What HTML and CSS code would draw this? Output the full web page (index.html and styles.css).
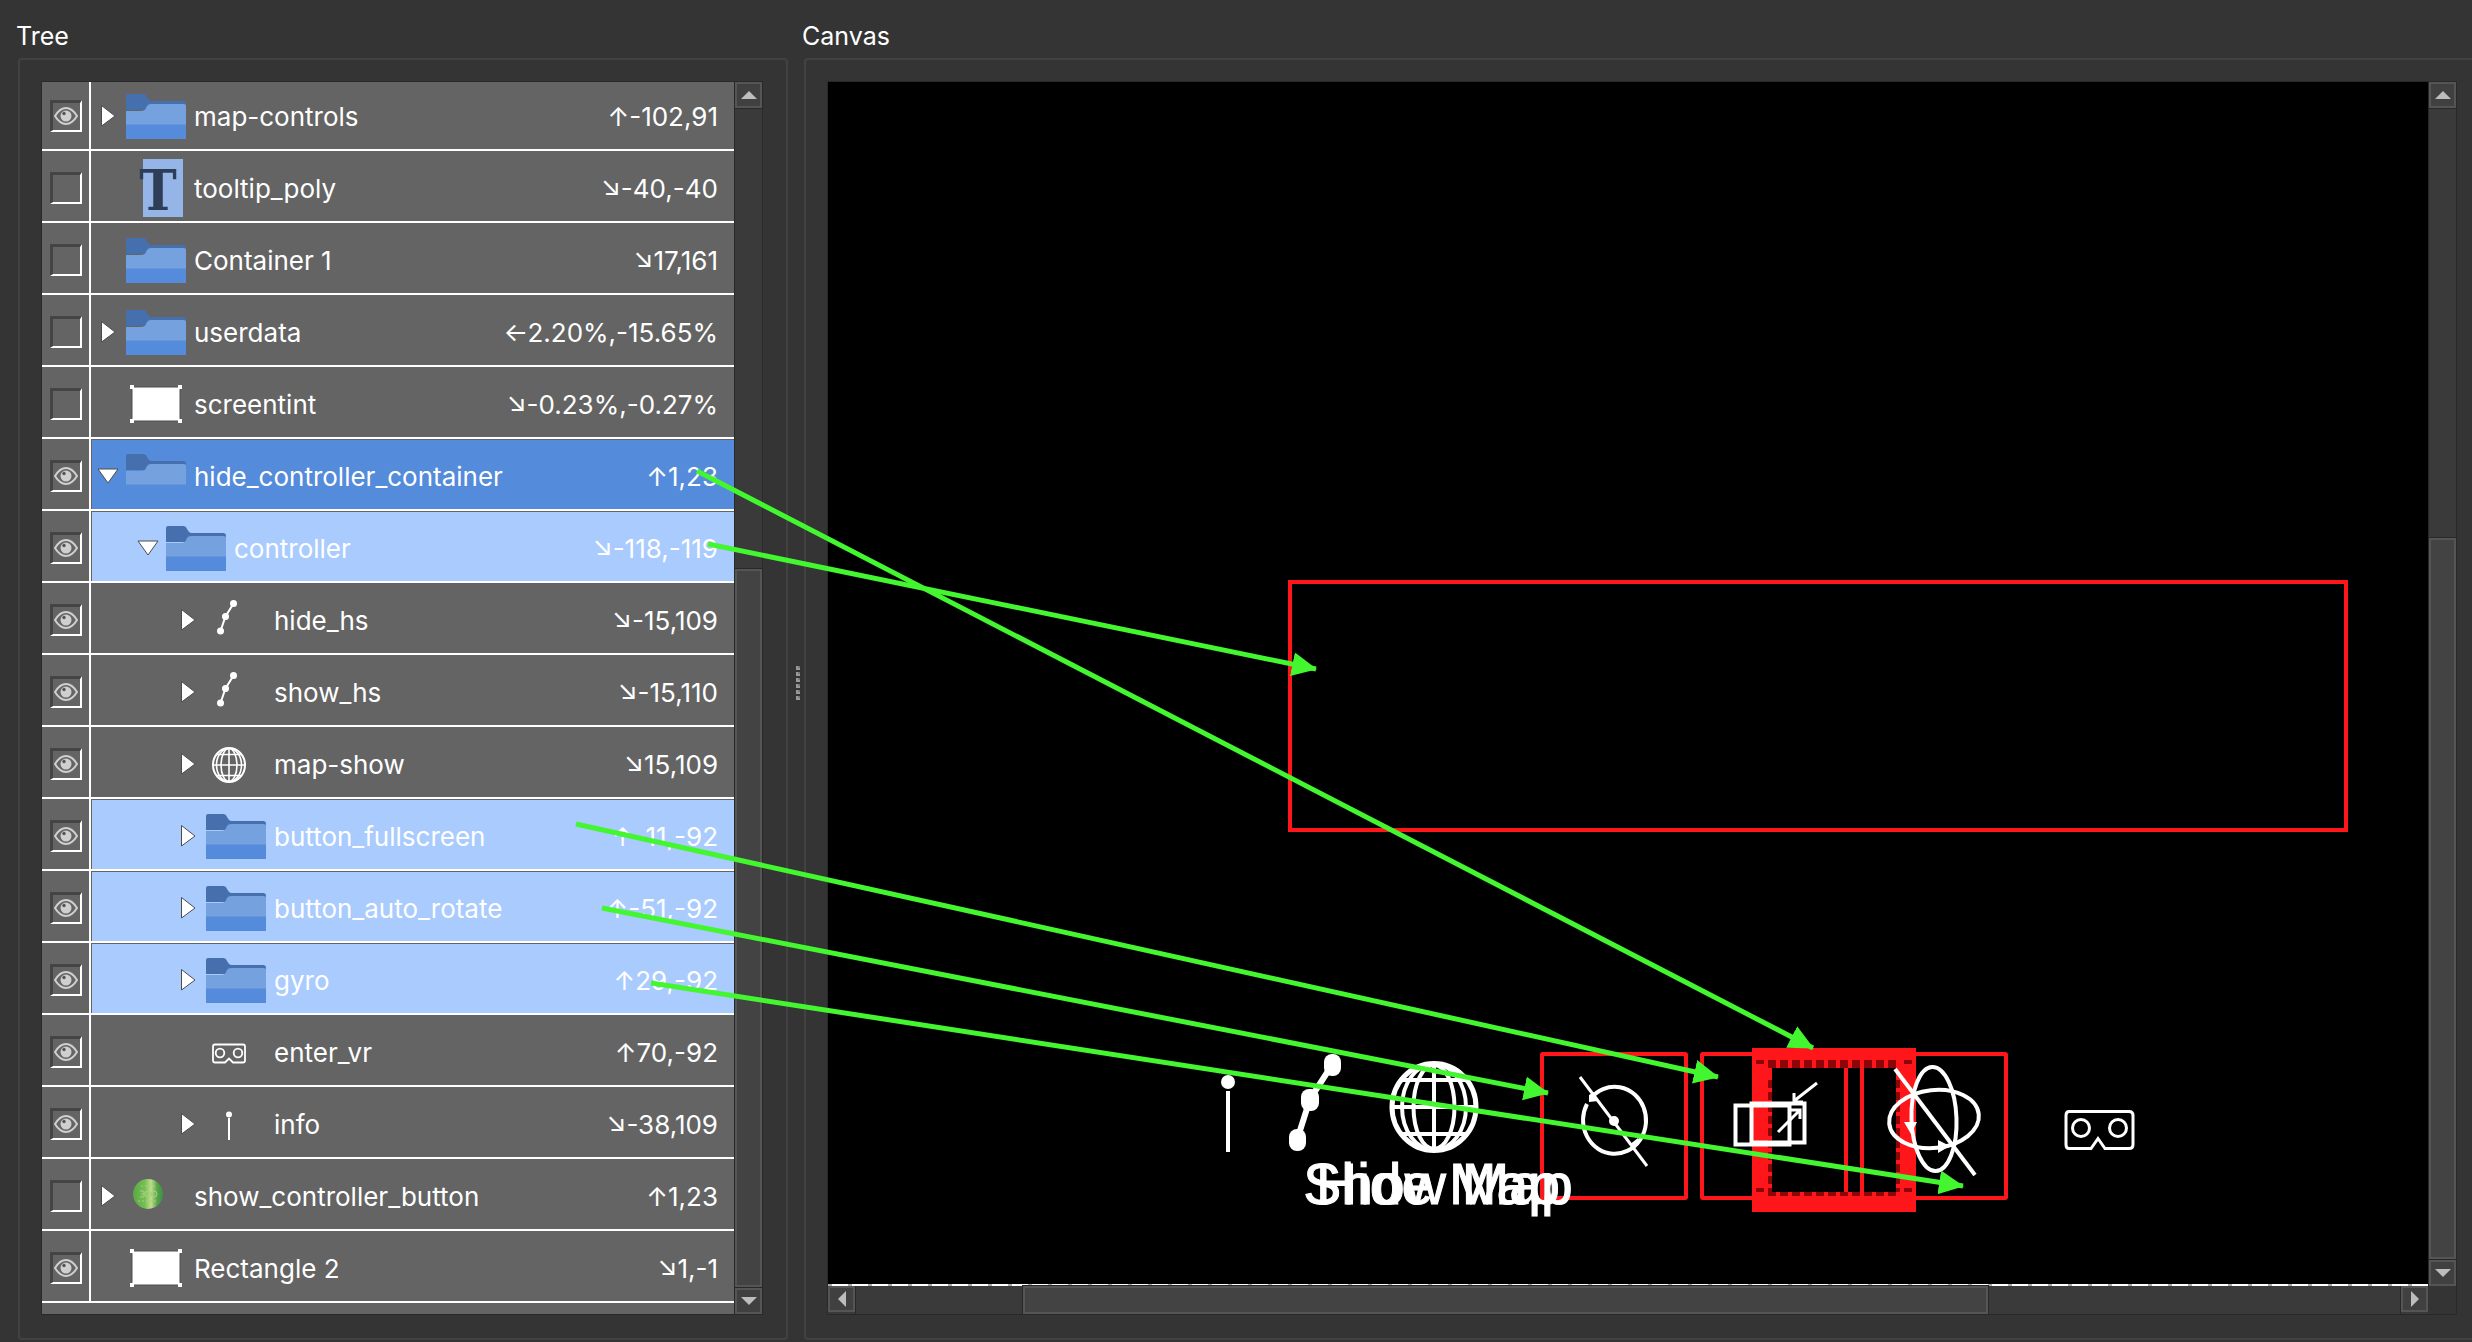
FILE: index.html
```html
<!DOCTYPE html>
<html lang="en">
<head>
<meta charset="utf-8">
<title>Skin editor</title>
<link rel="stylesheet" href="styles.css">
</head>
<body>
<svg class="defs" aria-hidden="true">
  <symbol id="eye" viewBox="0 0 32 32"><path d="M5 16C9 9.500 12 8 16 8s7 1.500 11 8c-4 6.500-7 8-11 8s-7-1.500-11-8z" fill="none" stroke="#cfcfcf" stroke-width="2"/><circle cx="16" cy="16" r="5.500" fill="#cfcfcf"/><circle cx="14" cy="13.500" r="1.700" fill="#555"/></symbol>
  <symbol id="closed" viewBox="0 0 24 24"><path d="M5.500 1.500V22L19 12z" fill="#fff" stroke="#4d4d4d" stroke-width="1"/></symbol>
  <symbol id="open" viewBox="0 0 24 24"><path d="M2 5H22L12 19z" fill="#fff" stroke="#4d4d4d" stroke-width="1"/></symbol>
  <symbol id="folder" viewBox="0 0 60 60"><path d="M0 10q0-2 2-2h15q3 0 4 3l2 3q1 1 3 1h31q3 0 3 3v6H0z" fill="#466fae"/><path d="M0 25h15q4 0 5-3l1-2q1-2 4-2h33q2 0 2 2v19H0z" fill="#75a1df"/><path d="M0 38.500h60V53H0z" fill="#548bda"/></symbol>
  <symbol id="rect" viewBox="0 0 60 60"><path d="M6 13h48v34H6z" fill="#fff" stroke="#4f4f4f"/><path d="M4 11h4v4H4zM52 11h4v4h-4zM4 45h4v4H4zM52 45h4v4h-4z" fill="#fff"/></symbol>
  <symbol id="nodes" viewBox="0 0 60 60"><path d="M27.500 13.500 19.500 26.500 14.500 41" fill="none" stroke="#fff" stroke-width="2"/><g fill="#fff"><circle cx="27.500" cy="13.500" r="3.500"/><circle cx="19.500" cy="26.500" r="3.500"/><circle cx="14.500" cy="41" r="3.500"/></g></symbol>
  <symbol id="globe" viewBox="0 0 60 60"><g fill="none" stroke="#fff" stroke-width="1.600"><ellipse cx="23" cy="31" rx="16" ry="17" stroke-width="2"/><ellipse cx="23" cy="31" rx="12.500" ry="16.500"/><ellipse cx="23" cy="31" rx="8" ry="16.500"/><path d="M23 14v34M7 31h32M10 20.500h26M10 41.500h26"/></g></symbol>
  <symbol id="vr" viewBox="0 0 60 60"><g fill="none" stroke="#fff" stroke-width="1.800"><path d="M9 22.500h28q2 0 2 2v14q0 2-2 2H27l-4-4-4 4H9q-2 0-2-2v-14q0-2 2-2z"/><circle cx="14" cy="31" r="4.300"/><circle cx="32" cy="31" r="4.300"/></g></symbol>
  <symbol id="info" viewBox="0 0 60 60"><circle cx="23" cy="20.500" r="3" fill="#fff"/><path d="M23 24v22" stroke="#fff" stroke-width="2"/></symbol>
  <symbol id="badge" viewBox="0 0 60 60"><circle cx="22" cy="28" r="15" fill="url(#green)"/><g fill="none" stroke="#a5d27d" stroke-width="1"><path d="M15 20h14M12 35h20" stroke-dasharray="2 2"/><circle cx="22" cy="28" r="3"/><circle cx="28" cy="28" r="3"/><path d="M14 25h4v6h-4m1-3h3"/></g></symbol>
  <linearGradient id="green"><stop offset="0" stop-color="#5aa843"/><stop offset=".4" stop-color="#76bf57"/><stop offset=".6" stop-color="#c3dc8e"/><stop offset=".8" stop-color="#58a648"/><stop offset="1" stop-color="#3d8f45"/></linearGradient>
</svg>

<main class="editor">
  <section class="panel" aria-labelledby="tree-title">
    <h2 class="panel-title" id="tree-title">Tree</h2>
    <div class="group">
      <div class="frame tree">
        <ul class="rows">
          <li class="row"><label class="vis"><input type="checkbox" checked aria-label="Show map-controls"><svg class="eye"><use href="#eye"/></svg></label><div class="item"><button class="twisty" aria-label="Expand"><svg><use href="#closed"/></svg></button><svg class="icon"><use href="#folder"/></svg><span class="name">map-controls</span><span class="pos">↑-102,91</span></div></li>
          <li class="row"><label class="vis"><input type="checkbox" aria-label="Show tooltip_poly"></label><div class="item"><span class="twisty"></span><svg class="icon" viewBox="0 0 60 60"><path d="M17 1h40v58H17z" fill="#95b5e8"/><text x="32" y="52" class="type-letter">T</text></svg><span class="name">tooltip_poly</span><span class="pos">↘-40,-40</span></div></li>
          <li class="row"><label class="vis"><input type="checkbox" aria-label="Show Container 1"></label><div class="item"><span class="twisty"></span><svg class="icon"><use href="#folder"/></svg><span class="name">Container 1</span><span class="pos">↘17,161</span></div></li>
          <li class="row"><label class="vis"><input type="checkbox" aria-label="Show userdata"></label><div class="item"><button class="twisty" aria-label="Expand"><svg><use href="#closed"/></svg></button><svg class="icon"><use href="#folder"/></svg><span class="name">userdata</span><span class="pos">←2.20%,-15.65%</span></div></li>
          <li class="row"><label class="vis"><input type="checkbox" aria-label="Show screentint"></label><div class="item"><span class="twisty"></span><svg class="icon"><use href="#rect"/></svg><span class="name">screentint</span><span class="pos">↘-0.23%,-0.27%</span></div></li>
          <li class="row current"><label class="vis"><input type="checkbox" checked aria-label="Show hide_controller_container"><svg class="eye"><use href="#eye"/></svg></label><div class="item"><button class="twisty" aria-label="Collapse"><svg><use href="#open"/></svg></button><svg class="icon"><use href="#folder"/></svg><span class="name">hide_controller_container</span><span class="pos">↑1,23</span></div></li>
          <li class="row selected level-1"><label class="vis"><input type="checkbox" checked aria-label="Show controller"><svg class="eye"><use href="#eye"/></svg></label><div class="item"><button class="twisty" aria-label="Collapse"><svg><use href="#open"/></svg></button><svg class="icon"><use href="#folder"/></svg><span class="name">controller</span><span class="pos">↘-118,-119</span></div></li>
          <li class="row level-2"><label class="vis"><input type="checkbox" checked aria-label="Show hide_hs"><svg class="eye"><use href="#eye"/></svg></label><div class="item"><button class="twisty" aria-label="Expand"><svg><use href="#closed"/></svg></button><svg class="icon"><use href="#nodes"/></svg><span class="name">hide_hs</span><span class="pos">↘-15,109</span></div></li>
          <li class="row level-2"><label class="vis"><input type="checkbox" checked aria-label="Show show_hs"><svg class="eye"><use href="#eye"/></svg></label><div class="item"><button class="twisty" aria-label="Expand"><svg><use href="#closed"/></svg></button><svg class="icon"><use href="#nodes"/></svg><span class="name">show_hs</span><span class="pos">↘-15,110</span></div></li>
          <li class="row level-2"><label class="vis"><input type="checkbox" checked aria-label="Show map-show"><svg class="eye"><use href="#eye"/></svg></label><div class="item"><button class="twisty" aria-label="Expand"><svg><use href="#closed"/></svg></button><svg class="icon"><use href="#globe"/></svg><span class="name">map-show</span><span class="pos">↘15,109</span></div></li>
          <li class="row selected level-2"><label class="vis"><input type="checkbox" checked aria-label="Show button_fullscreen"><svg class="eye"><use href="#eye"/></svg></label><div class="item"><button class="twisty" aria-label="Expand"><svg><use href="#closed"/></svg></button><svg class="icon"><use href="#folder"/></svg><span class="name">button_fullscreen</span><span class="pos">↑-11,-92</span></div></li>
          <li class="row selected level-2"><label class="vis"><input type="checkbox" checked aria-label="Show button_auto_rotate"><svg class="eye"><use href="#eye"/></svg></label><div class="item"><button class="twisty" aria-label="Expand"><svg><use href="#closed"/></svg></button><svg class="icon"><use href="#folder"/></svg><span class="name">button_auto_rotate</span><span class="pos">↑-51,-92</span></div></li>
          <li class="row selected level-2"><label class="vis"><input type="checkbox" checked aria-label="Show gyro"><svg class="eye"><use href="#eye"/></svg></label><div class="item"><button class="twisty" aria-label="Expand"><svg><use href="#closed"/></svg></button><svg class="icon"><use href="#folder"/></svg><span class="name">gyro</span><span class="pos">↑29,-92</span></div></li>
          <li class="row level-2"><label class="vis"><input type="checkbox" checked aria-label="Show enter_vr"><svg class="eye"><use href="#eye"/></svg></label><div class="item"><span class="twisty"></span><svg class="icon"><use href="#vr"/></svg><span class="name">enter_vr</span><span class="pos">↑70,-92</span></div></li>
          <li class="row level-2"><label class="vis"><input type="checkbox" checked aria-label="Show info"><svg class="eye"><use href="#eye"/></svg></label><div class="item"><button class="twisty" aria-label="Expand"><svg><use href="#closed"/></svg></button><svg class="icon"><use href="#info"/></svg><span class="name">info</span><span class="pos">↘-38,109</span></div></li>
          <li class="row"><label class="vis"><input type="checkbox" aria-label="Show show_controller_button"></label><div class="item"><button class="twisty" aria-label="Expand"><svg><use href="#closed"/></svg></button><svg class="icon"><use href="#badge"/></svg><span class="name">show_controller_button</span><span class="pos">↑1,23</span></div></li>
          <li class="row"><label class="vis"><input type="checkbox" checked aria-label="Show Rectangle 2"><svg class="eye"><use href="#eye"/></svg></label><div class="item"><span class="twisty"></span><svg class="icon"><use href="#rect"/></svg><span class="name">Rectangle 2</span><span class="pos">↘1,-1</span></div></li>
        </ul>
        <div class="bar vertical tree-bar">
          <button class="step" aria-label="Scroll up"><svg viewBox="0 0 16 8"><path d="M8 0l8 8H0z"/></svg></button>
          <div class="track"><div class="before"></div><div class="thumb"></div></div>
          <button class="step" aria-label="Scroll down"><svg viewBox="0 0 16 8"><path d="M0 0h16L8 8z"/></svg></button>
        </div>
      </div>
    </div>
  </section>

  <div class="splitter"><i></i><i></i><i></i><i></i><i></i><i></i></div>

  <section class="panel canvas-panel" aria-labelledby="canvas-title">
    <h2 class="panel-title" id="canvas-title">Canvas</h2>
    <div class="group">
      <div class="frame canvas">
        <div class="stage">
          <svg class="scene" width="1600" height="1200" viewBox="828 82 1600 1200">
            <rect class="sel" x="1290" y="582" width="1056" height="248"/>
            <g class="sel">
              <rect x="1542" y="1054" width="144" height="144" rx="1"/>
              <rect x="1702" y="1054" width="144" height="144" rx="1"/>
              <rect x="1862" y="1054" width="144" height="144" rx="1"/>
              <rect x="1762" y="1058" width="144" height="144" stroke-width="20"/>
            </g>
            <g class="handles">
              <path d="M1768 1064h128" stroke-width="8"/>
              <path d="M1768 1194h132M1770 1080v112M1898 1080v112" stroke-width="4"/>
              <path d="M1756 1062h8M1756 1190h8M1904 1062h8M1904 1190h8" stroke-width="4"/>
            </g>
            <g class="caption">
              <text x="1438" y="1204">Hide Map</text>
              <text x="1438" y="1204">Show Map</text>
            </g>
            <g class="glyph">
              <circle class="solid" cx="1228" cy="1082" r="7"/>
              <path d="M1228 1091v61" stroke-width="4"/>
              <path d="M1332 1065 1310 1099 1297 1140" stroke-width="6"/>
              <rect class="solid" x="1324" y="1054" width="17" height="22" rx="8"/>
              <rect class="solid" x="1301" y="1089" width="18" height="22" rx="8"/>
              <rect class="solid" x="1289" y="1129" width="17" height="22" rx="8"/>
              <ellipse class="heavy" cx="1434" cy="1107" rx="42" ry="43.500"/>
              <g class="medium">
                <ellipse cx="1434" cy="1107" rx="32" ry="43"/>
                <ellipse cx="1434" cy="1107" rx="20.500" ry="42"/>
                <path d="M1434 1064v86M1392 1107h84M1401 1080h66M1401 1134h66"/>
                <path d="M1591 1098a31.500 33.500 0 1 1-4 6"/>
              </g>
              <circle class="solid" cx="1614" cy="1121" r="5"/>
              <path d="M1580 1077l67 89"/>
              <path class="solid" d="M1589 1102v-7l5-3 4 9zM1638 1138v8l-9-1z"/>
              <path class="medium" d="M1735.500 1105.500h54v39h-54zM1751.500 1103.500h53v39h-53z"/>
              <path d="M1817 1083l-23 18M1794 1093v9h9M1778 1132l22-22M1791 1110h9v9"/>
              <ellipse class="medium" cx="1934" cy="1119" rx="22.500" ry="52" transform="rotate(-2 1934 1119)"/>
              <ellipse class="medium" cx="1934" cy="1119" rx="45" ry="29" transform="rotate(-6 1934 1119)"/>
              <path class="medium" d="M1895 1069l80 106"/>
              <path class="solid" d="M1904 1122h13l-6 12zM1938 1140v13l12-7z"/>
              <path d="M2069 1111.500h60q4 0 4 4v29q0 4-4 4h-24l-7-10-7 10h-22q-3 0-3-4v-29q0-4 3-4z"/>
              <circle cx="2081" cy="1128" r="8.500"/>
              <circle cx="2118" cy="1128" r="8.500"/>
            </g>
          </svg>
        </div>
        <div class="bar vertical canvas-v">
          <button class="step" aria-label="Scroll up"><svg viewBox="0 0 16 8"><path d="M8 0l8 8H0z"/></svg></button>
          <div class="track"><div class="before"></div><div class="thumb"></div></div>
          <button class="step" aria-label="Scroll down"><svg viewBox="0 0 16 8"><path d="M0 0h16L8 8z"/></svg></button>
        </div>
        <div class="bar horizontal canvas-h">
          <button class="step" aria-label="Scroll left"><svg viewBox="0 0 8 16"><path d="M8 0v16L0 8z"/></svg></button>
          <div class="track"><div class="before"></div><div class="thumb"></div><div class="after"></div></div>
          <button class="step" aria-label="Scroll right"><svg viewBox="0 0 8 16"><path d="M0 0l8 8-8 8z"/></svg></button>
        </div>
      </div>
    </div>
  </section>
</main>

<svg class="notes" width="2472" height="1342" viewBox="0 0 2472 1342" aria-hidden="true">
  <marker id="tip" markerUnits="userSpaceOnUse" markerWidth="26" markerHeight="26" refX="24" refY="12" orient="auto"><path d="M0 0l25 12L0 24z" fill="#43f62f"/></marker>
  <g stroke="#43f62f" stroke-width="5" fill="none" marker-end="url(#tip)">
    <path d="M697 471 1813 1048"/>
    <path d="M708 544 1316 669"/>
    <path d="M576 824 1718 1077"/>
    <path d="M602 908 1548 1093"/>
    <path d="M651 983 1963 1186"/>
  </g>
</svg>
</body>
</html>
```

FILE: styles.css
```css
* {
  box-sizing: border-box;
}

body {
  margin: 0;
  height: 100vh;
  overflow: hidden;
  position: relative;
  background: #343434;
  color: #fff;
  font-family: Inter, "Liberation Sans", sans-serif;
  font-size: 26px;
  line-height: 32px;
}

button {
  padding: 0;
  border: 0;
  background: none;
}

svg {
  display: block;
  overflow: visible;
}

.defs {
  position: absolute;
  width: 0;
  height: 0;
}

.editor {
  display: flex;
  height: 100%;
  padding: 0 0 2px 18px;
}

.panel {
  display: flex;
  flex: 0 0 770px;
  flex-direction: column;
  min-width: 0;
}

.canvas-panel {
  flex: 1;
}

.panel-title {
  flex: none;
  height: 58px;
  margin: 0 0 0 -2px;
  padding-top: 20px;
  font-size: 25px;
  font-weight: 400;
  line-height: 32px;
}

.group {
  display: flex;
  flex: 1;
  min-height: 0;
  padding: 21px 23px 23px 21px;
  border: 2px solid #424242;
  border-radius: 4px;
}

.canvas-panel .group {
  padding-right: 15px;
  border-right: 0;
  border-radius: 4px 0 0 4px;
}

.frame {
  flex: 1;
  min-width: 0;
  border: 1px solid #292929;
  overflow: hidden;
}

/* Tree */

.tree {
  display: grid;
  grid-template-columns: 1fr 28px;
  background: #646464;
}

.rows {
  margin: -3px 0 0;
  padding: 0;
  list-style: none;
}

.row {
  display: grid;
  grid-template-columns: 49px 1fr;
  height: 72px;
  border-bottom: 2px solid #fff;
}

.vis {
  display: grid;
  align-content: center;
  padding: 4px 0 0 8px;
  border-right: 2px solid #fff;
}

.vis input,
.eye {
  grid-area: 1 / 1;
  width: 32px;
  height: 32px;
  margin: 0;
}

.vis input {
  appearance: none;
  border: solid;
  border-width: 3px 2px 2px 3px;
  border-color: #444 #fff #fff #444;
}

.item {
  display: flex;
  align-items: center;
  padding: 4px 16px 0 5px;
  white-space: nowrap;
}

.level-1 .item {
  padding-left: 45px;
}

.level-2 .item {
  padding-left: 85px;
}

.current .item,
.selected .item {
  border: solid #646464;
  border-width: 1px 0 0 1px;
  padding-top: 3px;
}

.current .item {
  padding-left: 4px;
  background: #548bda;
}

.selected .item {
  background: #a9cbfe;
}

.selected.level-1 .item {
  padding-left: 44px;
}

.selected.level-2 .item {
  padding-left: 84px;
}

.twisty {
  flex: none;
  width: 24px;
  height: 24px;
  margin-right: 6px;
}

.twisty svg {
  width: 24px;
  height: 24px;
}

.icon {
  flex: none;
  width: 60px;
  height: 60px;
  margin-right: 8px;
}

.type-letter {
  font-family: "DejaVu Serif Condensed", "DejaVu Serif", serif;
  font-size: 56px;
  font-weight: 700;
  text-anchor: middle;
  fill: #2f3e57;
}

.name,
.pos {
  padding-top: 2px;
}

.pos {
  margin-left: auto;
}

/* Scroll bars */

.bar {
  display: flex;
  background: #3a3a3a;
  border: 0 solid #292929;
}

.vertical {
  flex-direction: column;
  border-left-width: 1px;
}

.step {
  display: grid;
  place-items: center;
  flex: none;
  width: 27px;
  height: 26px;
  border: 2px solid #555;
  background: #404040;
}

.step path {
  fill: #bdbdbd;
}

.vertical .step svg {
  width: 16px;
  height: 8px;
}

.horizontal .step svg {
  width: 8px;
  height: 16px;
}

.track {
  display: flex;
  flex: 1;
  flex-direction: inherit;
}

.vertical .track {
  border: solid #292929;
  border-width: 1px 0;
}

.horizontal .track {
  border: solid #292929;
  border-width: 0 1px;
}

.thumb {
  border: 2px solid #555;
  background: #434343;
  outline: 1px solid #292929;
}

.tree-bar .before { flex: 461; }
.tree-bar .thumb { flex: 715; }
.canvas-v .before { flex: 430; }
.canvas-v .thumb { flex: 718; }
.canvas-h .before { flex: 168; }
.canvas-h .thumb { flex: 964; }
.canvas-h .after { flex: 413; }

/* Splitter */

.splitter {
  display: flex;
  flex: 0 0 16px;
  flex-direction: column;
  align-items: center;
  justify-content: center;
  gap: 2px;
  padding: 26px 0 0 4px;
}

.splitter i {
  width: 4px;
  height: 4px;
  background: #777;
  border: solid #999;
  border-width: 0 0 2px 2px;
}

/* Canvas */

.canvas {
  display: grid;
  grid-template: 1fr 28px / 1fr 28px;
}

.stage {
  display: flex;
  flex-direction: column;
  min-width: 0;
  min-height: 0;
  overflow: hidden;
  background: #000;
}

.stage::after {
  content: "";
  flex: none;
  height: 2px;
  margin-top: auto;
  background: repeating-linear-gradient(90deg, #fff 0 20px, #aaa 20px 24px, #fff 24px 40px);
  background: repeating-linear-gradient(90deg, #aaa 0 4px, #fff 4px 20px);
}

.scene {
  flex: 0 1 auto;
  min-height: 0;
}

.sel {
  fill: none;
  stroke: #ff161b;
  stroke-width: 4;
}

.handles {
  fill: none;
  stroke: #8d0509;
  stroke-dasharray: 8 4;
}

.caption {
  font-family: "Liberation Sans", Arial, sans-serif;
  font-size: 57px;
  text-anchor: middle;
  fill: #fff;
  stroke: #fff;
  stroke-width: 1;
}

.glyph {
  fill: none;
  stroke: #fff;
  stroke-width: 3;
}

.glyph .solid {
  fill: #fff;
  stroke: none;
}

.glyph .medium {
  stroke-width: 4;
}

.glyph .heavy {
  stroke-width: 5;
}

/* Annotation arrows lie over both panels */

.notes {
  position: absolute;
  top: 0;
  left: 0;
  pointer-events: none;
}

.notes path {
  marker-end: inherit;
}
```
